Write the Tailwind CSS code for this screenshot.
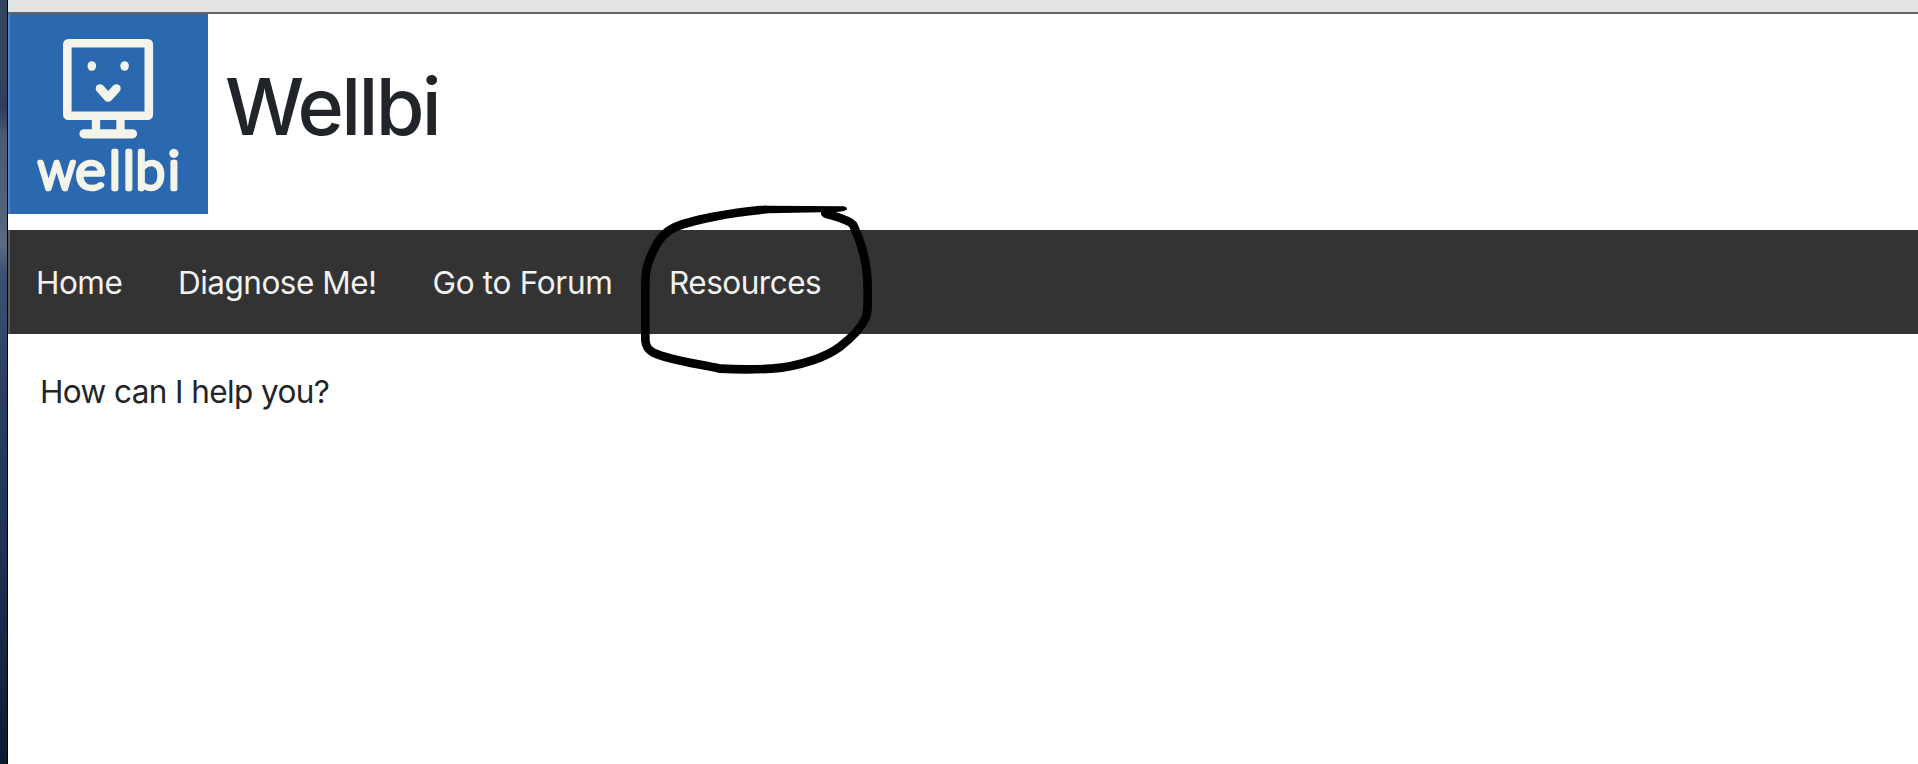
<!DOCTYPE html>
<html lang="en">
<head>
<meta charset="utf-8">
<title>Wellbi</title>
<script src="https://cdn.jsdelivr.net/npm/@tailwindcss/browser@4"></script>
</head>
<body class="relative flex h-[764px] w-[1918px] overflow-hidden bg-white font-['Inter','Liberation_Sans',sans-serif] text-[#212529]">
  <div class="h-full w-2 shrink-0 border-r border-black bg-[linear-gradient(to_bottom,#33465f_0px,#34455f_70px,#2e3d5c_108px,#4a5a74_135px,#52627b_210px,#5a6b83_245px,#3b5172_275px,#324a6b_330px,#2b3f63_380px,#233a5e_460px,#1d3153_560px,#142643_660px,#0c1b30_764px)]"></div>
  <div class="flex min-w-0 flex-1 flex-col">
    <div class="h-[14px] shrink-0 border-b-2 border-[#636366] bg-[#e4e4e4]"></div>
    <header class="flex h-[216px] shrink-0 items-start">
      <svg class="h-[200px] w-[200px] shrink-0" viewBox="0 0 200 200">
        <rect width="200" height="200" fill="#2a69b0"/>
        <rect width="2" height="200" fill="#5583be"/>
        <g fill="none" stroke="#f4f4ea" stroke-linecap="round" stroke-linejoin="round">
          <rect x="59.3" y="29.3" width="81.500" height="72.500" rx="1" stroke-width="8.6"/>
          <path d="M88 103v17M112.500 103v17" stroke-width="8.3" stroke-linecap="butt"/>
          <path d="M76 119.8h48.500" stroke-width="9.2"/>
          <path d="M92 74.500l8.200 9 8.200-9" stroke-width="8.6"/>
        </g>
        <ellipse cx="83.8" cy="52" rx="4.3" ry="4.8" fill="#f4f4ea"/>
        <ellipse cx="116.6" cy="52" rx="4.3" ry="4.8" fill="#f4f4ea"/>
        <g class="font-['Lato',sans-serif] text-[53px] font-light" fill="#f4f4ea" stroke="#f4f4ea" stroke-width="4.4" stroke-linejoin="round">
          <text transform="translate(30 174.800) scale(.92 1)">w</text>
          <text transform="translate(67.500 174.800) scale(1.08 1)">e</text>
          <text x="101 115 127.800 160" y="174.800">llbi</text>
        </g>
      </svg>
      <h1 class="ml-[17px] mt-[44px] text-[79px] leading-[96px] font-medium tracking-[-2.7px]">Wellbi</h1>
    </header>
    <nav class="flex h-[104px] shrink-0 items-center border-l-2 border-[#5b5b5b] bg-[#333] pt-[2px] pl-[26px] text-[31.5px] leading-[48px] tracking-[-0.5px] text-[#f2f2f2]">
      <a class="w-[142px] whitespace-nowrap">Home</a>
      <a class="w-[254.5px] whitespace-nowrap">Diagnose Me!</a>
      <a class="w-[236.500px] whitespace-nowrap tracking-[-0.3px]">Go to Forum</a>
      <a class="whitespace-nowrap">Resources</a>
    </nav>
    <main class="px-8 pt-[34px]">
      <p class="text-[31.5px] leading-[48px] tracking-[-0.6px]">How can I help you?</p>
    </main>
  </div>
  <svg class="absolute left-[620px] top-[190px] h-[200px] w-[270px]" viewBox="0 0 810 600" fill="none" stroke="#000" stroke-linejoin="round">
    <path d="M420 60C340 67 210 90 160 114C128 129 112 154 98 186C78 232 76 243 76 300V450C77 470 84 479 100 488C150 512 240 522 300 536Q380 540 455 536C540 530 620 500 660 470C690 447 724 412 737 384C744 368 743 350 743 300C744 225 728 165 699 104C685 89 650 81 616 70" stroke-width="26" stroke-linecap="round"/>
    <path d="M405 50Q425 46 445 47L672 49Q684 53 680 59Q674 64 645 66L445 70L420 73Z" fill="#000" stroke="none"/>
  </svg>
</body>
</html>
